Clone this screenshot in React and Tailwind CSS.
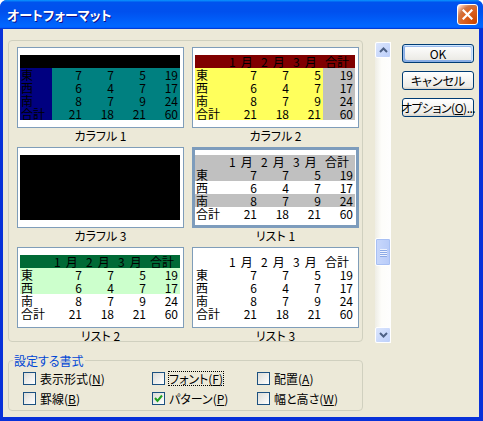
import clsx from "clsx";

const rows = [
  ["", "1", "2", "3", "合計"],
  ["東", "7", "7", "5", "19"],
  ["西", "6", "4", "7", "17"],
  ["南", "8", "7", "9", "24"],
  ["合計", "21", "18", "21", "60"],
];

// background of one cell for each sample format
// (the dithered fills of the original are given as their blended colour)
function cellBg(variant, r, c) {
  switch (variant) {
    case "colorful1":
      if (r === 0) return "bg-black";
      return c === 0 ? "bg-[#000080]" : "bg-[#008080]";
    case "colorful2":
      if (r === 0) return "bg-[#800000]";
      return c === 4 ? "bg-[#c0c0c0]" : "bg-[#ffff5c]";
    case "colorful3":
      return "bg-black";
    case "list1":
      return r === 0 || r === 1 || r === 3 ? "bg-[#c0c0c0]" : "bg-white";
    case "list2":
      if (r === 0) return "bg-[#006a36]";
      return r === 1 || r === 2 ? "bg-[#ccffcc]" : "bg-white";
    default:
      return "bg-white";
  }
}

function SampleTable({ variant }) {
  return (
    <div className="grid w-[160px] grid-cols-[repeat(5,32px)]">
      {rows.map((row, r) =>
        row.map((cell, c) => (
          <div
            key={r + "-" + c}
            className={clsx(
              "h-[13px] overflow-hidden whitespace-nowrap text-[12px] leading-[13px] text-black",
              cellBg(variant, r, c),
              r === 0 ? "pl-[2px] text-left" : c === 0 ? "pl-[1px] text-left" : "pr-[2px] text-right"
            )}
          >
            {r === 0 && c > 0 && c < 4 ? (
              <>
                {cell}
                <span className="ml-[5px]">月</span>
              </>
            ) : (
              cell
            )}
          </div>
        ))
      )}
    </div>
  );
}

function Preview({ variant, label, selected }) {
  return (
    <div className="flex flex-col">
      <div
        className={clsx(
          "h-[81px] w-[167px] bg-white",
          selected
            ? "border-[3px] border-[#7d9cbc] pt-[5px]"
            : "border border-[#7f9db9] pl-[2px] pt-[7px]"
        )}
      >
        <SampleTable variant={variant} />
      </div>
      <div className="h-[19px] pt-[1px] text-center text-[12px] leading-[13px] text-black">
        {label}
      </div>
    </div>
  );
}

function XpButton({ children, isDefault }) {
  return (
    <button
      className={clsx(
        "flex h-[19px] w-[72px] items-center justify-center overflow-visible whitespace-nowrap rounded-[3px] border border-[#003c74] bg-[linear-gradient(180deg,#ffffff,#ecebe6_86%,#d6d0c5)] text-[12px] leading-none text-black",
        isDefault &&
          "shadow-[inset_-1px_1px_#cee7ff,inset_1px_2px_#98b8ea,inset_-2px_2px_#bcd4f6,inset_1px_-1px_#89ade4,inset_2px_-2px_#89ade4]"
      )}
    >
      {children}
    </button>
  );
}

function ScrollArrow({ up }) {
  return (
    <div className="flex h-[16px] w-[16px] items-center justify-center rounded-[2px] border border-white bg-[linear-gradient(135deg,#dce6fd,#bccffa)]">
      <svg width="9" height="6" viewBox="0 0 9 6">
        <polyline
          points={up ? "1,5 4.5,1.5 8,5" : "1,1 4.5,4.5 8,1"}
          fill="none"
          stroke="#4d6185"
          strokeWidth="2"
        />
      </svg>
    </div>
  );
}

function Check({ label, mnemonic, checked, focused }) {
  return (
    <div className="flex h-[13px] items-center gap-[4px]">
      <div className="flex h-[13px] w-[13px] shrink-0 items-center justify-center border border-[#1c5180] bg-[linear-gradient(135deg,#dcdcd7,#ffffff)]">
        {checked && (
          <svg width="9" height="9" viewBox="0 0 9 9">
            <polyline points="1,4 3.5,7 8,1.5" fill="none" stroke="#21a121" strokeWidth="2" />
          </svg>
        )}
      </div>
      <span
        className={clsx(
          "whitespace-nowrap text-[12px] leading-[13px] text-black",
          focused && "outline outline-1 outline-dotted outline-black"
        )}
      >
        {label}(<span className="underline">{mnemonic}</span>)
      </span>
    </div>
  );
}

export default function App() {
  return (
    <div className="flex h-[421px] w-[483px] flex-col overflow-hidden rounded-t-[7px] bg-[#0831d9] font-['Noto_Sans_CJK_JP',sans-serif] [font-feature-settings:'palt']">
      {/* title bar */}
      <div className="flex h-[29px] shrink-0 items-center justify-between bg-[linear-gradient(180deg,#0997ff,#0053ee_8%,#0050ee_40%,#0066ff_88%,#0066ff_93%,#005bff_95%,#003dd7_96%,#003dd7)] pl-[7px] pr-[5px]">
        <span className="text-[13px] font-bold leading-none text-white [text-shadow:1px_1px_#0f1089]">
          オートフォーマット
        </span>
        <div className="flex h-[21px] w-[21px] items-center justify-center rounded-[3px] border border-white bg-[radial-gradient(circle_at_90%_90%,#cc4600_0,#dc6527_55%,#cd7546_70%,#ffccb2_90%,#ffffff_100%)]">
          <svg width="11" height="11" viewBox="0 0 11 11">
            <path d="M1.5 1.5 L9.5 9.5 M9.5 1.5 L1.5 9.5" stroke="#fff" strokeWidth="2.2" strokeLinecap="square" />
          </svg>
        </div>
      </div>

      {/* dialog body */}
      <div className="mb-[4px] ml-[3px] mr-[4px] flex flex-1 flex-col bg-[#ece9d8] pl-[5px]">
        <div className="flex pt-[11px]">
          <div className="h-[302px] w-[355px] shrink-0 overflow-hidden rounded-[4px] border border-[#d0d0bf]">
            <div className="grid grid-cols-[167px_167px] gap-x-[8px] pl-[8px] pt-[6px]">
              <Preview variant="colorful1" label="カラフル 1" />
              <Preview variant="colorful2" label="カラフル 2" />
              <Preview variant="colorful3" label="カラフル 3" />
              <Preview variant="list1" label="リスト 1" selected />
              <Preview variant="list2" label="リスト 2" />
              <Preview variant="list3" label="リスト 3" />
            </div>
          </div>

          {/* scrollbar */}
          <div className="ml-[12px] mt-[2px] flex h-[301px] w-[16px] shrink-0 flex-col bg-[linear-gradient(90deg,#eeede5,#fdfdfa_40%,#fefefe)]">
            <ScrollArrow up />
            <div className="h-[180px]" />
            <div className="flex h-[28px] w-[16px] flex-col items-center justify-center gap-[1px] rounded-[2px] border border-white bg-[linear-gradient(90deg,#c9d8fc,#b7cbf8)] shadow-[inset_0_0_0_1px_#a8c0f4]">
              {[0, 1, 2, 3].map((i) => (
                <div key={i} className="h-[1px] w-[7px] bg-[#eef3fe] shadow-[0_1px_#8caae6]" />
              ))}
            </div>
            <div className="flex-1" />
            <ScrollArrow />
          </div>

          {/* buttons */}
          <div className="ml-[11px] flex flex-col gap-[8px] pt-[4px]">
            <XpButton isDefault>OK</XpButton>
            <XpButton>キャンセル</XpButton>
            <XpButton>
              <span className="tracking-[-0.5px]">
                オプション(<span className="underline">O</span>)...
              </span>
            </XpButton>
          </div>
        </div>

        <fieldset className="mt-[11px] h-[57px] w-[355px] rounded-[4px] border border-[#d0d0bf] px-0">
          <legend className="ml-[4px] px-[1px] text-[12px] leading-[13px] text-[#0046d5]">
            設定する書式
          </legend>
          <div className="mt-[5px] grid grid-cols-[129px_105px_1fr] gap-y-[7px] pl-[14px]">
            <Check label="表示形式" mnemonic="N" />
            <Check label="フォント" mnemonic="F" focused />
            <Check label="配置" mnemonic="A" />
            <Check label="罫線" mnemonic="B" />
            <Check label="パターン" mnemonic="P" checked />
            <Check label="幅と高さ" mnemonic="W" />
          </div>
        </fieldset>
      </div>
    </div>
  );
}
